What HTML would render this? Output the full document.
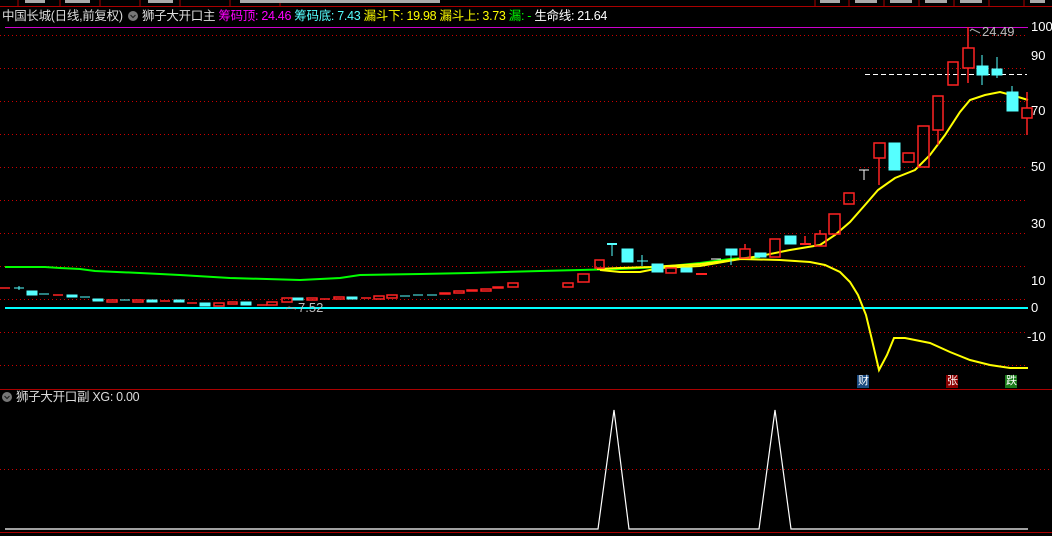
<!DOCTYPE html>
<html><head><meta charset="utf-8"><style>
body{margin:0;background:#000;width:1052px;height:536px;overflow:hidden;font-family:"Liberation Sans","Noto Sans CJK SC",sans-serif;}
svg{position:absolute;left:0;top:0}
.t{position:absolute;font-size:13px;white-space:nowrap;line-height:16px}
.h{font-size:12.5px;letter-spacing:-0.3px}
</style></head><body>
<svg width="1052" height="536">
<rect x="0" y="0" width="1052" height="7" fill="#000"/>
<g stroke="#a00" stroke-width="1">
<line x1="0" y1="6.5" x2="1052" y2="6.5"/>
<line x1="18" y1="0" x2="18" y2="6"/><line x1="60" y1="0" x2="60" y2="6"/><line x1="100" y1="0" x2="100" y2="6"/><line x1="140" y1="0" x2="140" y2="6"/><line x1="180" y1="0" x2="180" y2="6"/><line x1="230" y1="0" x2="230" y2="6"/><line x1="280" y1="0" x2="280" y2="6"/><line x1="815" y1="0" x2="815" y2="6"/><line x1="849" y1="0" x2="849" y2="6"/><line x1="884" y1="0" x2="884" y2="6"/><line x1="919" y1="0" x2="919" y2="6"/><line x1="954" y1="0" x2="954" y2="6"/><line x1="989" y1="0" x2="989" y2="6"/><line x1="1024" y1="0" x2="1024" y2="6"/>
</g>
<g fill="#aaa"><rect x="25" y="0" width="20" height="3"/><rect x="65" y="0" width="25" height="3"/><rect x="148" y="0" width="25" height="3"/><rect x="240" y="0" width="200" height="3"/><rect x="820" y="0" width="20" height="3"/><rect x="855" y="0" width="22" height="3"/><rect x="890" y="0" width="22" height="3"/><rect x="925" y="0" width="22" height="3"/><rect x="960" y="0" width="22" height="3"/><rect x="1030" y="0" width="15" height="3"/></g>
<line x1="5" y1="27.5" x2="1028" y2="27.5" stroke="#c0c" stroke-width="1"/>
<g stroke="#c00" stroke-width="1" stroke-dasharray="1,3">
<line x1="0" y1="35.5" x2="1028" y2="35.5"/><line x1="0" y1="68.5" x2="1028" y2="68.5"/><line x1="0" y1="101.5" x2="1028" y2="101.5"/><line x1="0" y1="134.5" x2="1028" y2="134.5"/><line x1="0" y1="167.5" x2="1028" y2="167.5"/><line x1="0" y1="200.5" x2="1028" y2="200.5"/><line x1="0" y1="233.5" x2="1028" y2="233.5"/><line x1="0" y1="266.5" x2="1028" y2="266.5"/><line x1="0" y1="299.5" x2="1028" y2="299.5"/><line x1="0" y1="332.5" x2="1028" y2="332.5"/><line x1="0" y1="365.5" x2="1028" y2="365.5"/>
<line x1="0" y1="469.5" x2="1052" y2="469.5"/>
</g>
<line x1="5" y1="308" x2="1028" y2="308" stroke="#0ff" stroke-width="2"/>
<line x1="865" y1="74.5" x2="1027" y2="74.5" stroke="#fff" stroke-dasharray="5,3"/>
<polyline fill="none" stroke="#0f0" stroke-width="2" points="5,267 45,267 60,268 80,269 95,271 140,273 180,275 230,278 300,280 340,278 360,275 420,274 470,273 540,271 580,270 620,269 660,267 700,263 730,259 760,257"/>
<polyline fill="none" stroke="#ff0" stroke-width="2" points="600,270 620,272 640,272 660,268 700,266 740,259 760,256 790,250 820,245 835,235 850,222 865,205 878,190 895,178 915,170 930,155 945,135 960,112 970,100 985,95 1000,92 1015,96 1028,100"/>
<polyline fill="none" stroke="#ff0" stroke-width="2" points="597,269 620,268 650,267 700,264 740,259 780,260 810,262 825,265 840,272 850,282 858,295 866,315 872,340 879,370 887,355 894,338 905,338 930,343 950,352 970,360 990,365 1010,368 1028,368"/>
<g stroke="#f22" fill="none" stroke-width="1.5">
<line x1="0" y1="288" x2="10" y2="288"/><line x1="53" y1="295" x2="63" y2="295"/><rect x="107" y="300" width="10" height="2"/><rect x="133" y="300" width="10" height="2"/><line x1="160" y1="301" x2="170" y2="301"/><line x1="187" y1="303" x2="197" y2="303"/><rect x="214" y="303" width="10" height="3"/><rect x="228" y="302" width="9" height="2"/><line x1="257" y1="305" x2="267" y2="305"/><rect x="267" y="302" width="10" height="3"/><rect x="282" y="298" width="10" height="4"/><rect x="307" y="298" width="10" height="2"/><line x1="320" y1="299" x2="330" y2="299"/><rect x="334" y="297" width="10" height="2"/><line x1="361" y1="298" x2="371" y2="298"/><rect x="374" y="296" width="10" height="3"/><rect x="387" y="295" width="10" height="3"/><rect x="440" y="293" width="10" height="1"/><rect x="454" y="291" width="10" height="2"/><rect x="467" y="290" width="10" height="1"/><rect x="481" y="289" width="10" height="2"/><rect x="493" y="287" width="10" height="1"/><rect x="508" y="283" width="10" height="4"/><rect x="563" y="283" width="10" height="4"/>
<rect x="578" y="274" width="11" height="8"/><rect x="595" y="260" width="9" height="8"/><rect x="666" y="268" width="10" height="5"/><line x1="696" y1="274" x2="707" y2="274" stroke-width="2"/>
<rect x="740" y="249" width="10" height="9"/><line x1="745" y1="244" x2="745" y2="249"/><rect x="770" y="239" width="10" height="18"/><line x1="800" y1="244" x2="811" y2="244" stroke-width="2"/><line x1="805" y1="236" x2="805" y2="244"/><rect x="815" y="234" width="11" height="12"/><line x1="820" y1="230" x2="820" y2="234"/><rect x="829" y="214" width="11" height="20"/><rect x="844" y="193" width="10" height="11"/><rect x="874" y="143" width="11" height="15"/><line x1="879" y1="158" x2="879" y2="185"/><rect x="903" y="153" width="11" height="9"/><rect x="918" y="126" width="11" height="41"/><rect x="933" y="96" width="10" height="34"/><line x1="938" y1="130" x2="938" y2="145"/><rect x="948" y="62" width="10" height="23"/><rect x="963" y="48" width="11" height="20"/><line x1="968" y1="27" x2="968" y2="48"/><line x1="968" y1="68" x2="968" y2="83"/><rect x="1022" y="108" width="10" height="10"/><line x1="1027" y1="92" x2="1027" y2="108"/><line x1="1027" y1="118" x2="1027" y2="135"/>
</g>
<g fill="#5ff" stroke="#5ff" stroke-width="1">
<line x1="14" y1="288" x2="24" y2="288"/><line x1="19" y1="286" x2="19" y2="290"/><rect x="27" y="291" width="10" height="4"/><line x1="39" y1="294" x2="49" y2="294"/><rect x="67" y="295" width="10" height="2"/><line x1="80" y1="297" x2="90" y2="297"/><rect x="93" y="299" width="10" height="2"/><line x1="120" y1="300" x2="130" y2="300"/><rect x="147" y="300" width="10" height="2"/><rect x="174" y="300" width="10" height="2"/><rect x="200" y="303" width="10" height="3"/><rect x="241" y="302" width="10" height="3"/><rect x="293" y="298" width="10" height="2"/><rect x="347" y="297" width="10" height="2"/><line x1="400" y1="296" x2="410" y2="296"/><line x1="413" y1="295" x2="423" y2="295"/><line x1="427" y1="295" x2="437" y2="295"/>
<line x1="607" y1="244" x2="617" y2="244" stroke-width="2"/><line x1="612" y1="244" x2="612" y2="256"/><rect x="622" y="249" width="11" height="13"/><line x1="637" y1="261" x2="648" y2="261"/><line x1="642" y1="255" x2="642" y2="266"/><rect x="652" y="264" width="11" height="8"/><rect x="681" y="268" width="11" height="4"/><rect x="726" y="249" width="11" height="6"/><line x1="731" y1="255" x2="731" y2="265"/><rect x="755" y="253" width="11" height="4"/><rect x="785" y="236" width="11" height="8"/><rect x="889" y="143" width="11" height="27"/><rect x="977" y="66" width="11" height="9"/><line x1="982" y1="55" x2="982" y2="85"/><rect x="992" y="69" width="10" height="6"/><line x1="997" y1="57" x2="997" y2="78"/><rect x="1007" y="92" width="11" height="19"/><line x1="1012" y1="86" x2="1012" y2="92"/>
</g>
<g stroke="#fff"><line x1="711" y1="259" x2="721" y2="259"/><line x1="859" y1="170" x2="869" y2="170"/><line x1="864" y1="170" x2="864" y2="180"/></g>
<polyline points="980,33 972,29 970,31" fill="none" stroke="#aaa"/>
<polyline points="296,309 289,307 286,309" fill="none" stroke="#aaa"/>
<rect x="857" y="375" width="12" height="13" fill="#1a4a80"/><rect x="946" y="375" width="12" height="13" fill="#8b0000"/><rect x="1005" y="375" width="12" height="13" fill="#1a7a1a"/>
<line x1="0" y1="389.5" x2="1052" y2="389.5" stroke="#a00"/>
<polyline fill="none" stroke="#fff" stroke-width="1.2" points="5,529 598,529 614,410 629,529 759,529 775,410 791,529 1028,529"/>
<line x1="0" y1="532.5" x2="1052" y2="532.5" stroke="#a00"/>
<circle cx="7" cy="397" r="5" fill="#777"/><polyline points="4.5,396 7,398.5 9.5,396" fill="none" stroke="#222" stroke-width="1.2"/>
<circle cx="133" cy="16" r="5" fill="#777"/><polyline points="130.5,15 133,17.5 135.5,15" fill="none" stroke="#222" stroke-width="1.2"/>
</svg>
<div class="t h" style="left:2px;top:8px;color:#ddd">中国长城(日线,前复权)</div>
<div class="t h" style="left:142px;top:8px;color:#ddd">狮子大开口主 <span style="color:#f0f">筹码顶: 24.46</span> <span style="color:#5ff">筹码底: 7.43</span> <span style="color:#ff0">漏斗下: 19.98</span> <span style="color:#ff0">漏斗上: 3.73</span> <span style="color:#0f0">漏: -</span> <span style="color:#fff">生命线: 21.64</span></div>
<div class="t h" style="left:16px;top:389px;color:#ddd">狮子大开口副 XG: 0.00</div>
<div class="t" style="left:982px;top:24px;color:#bbb">24.49</div>
<div class="t" style="left:298px;top:300px;color:#bbb">7.52</div>
<div class="t" style="left:858px;top:373px;color:#fff;font-size:11px">财</div>
<div class="t" style="left:947px;top:373px;color:#fff;font-size:11px">张</div>
<div class="t" style="left:1006px;top:373px;color:#fff;font-size:11px">跌</div>
<div class="t" style="left:1031px;top:19px;color:#fff">100</div>
<div class="t" style="left:1031px;top:48px;color:#fff">90</div>
<div class="t" style="left:1031px;top:103px;color:#fff">70</div>
<div class="t" style="left:1031px;top:159px;color:#fff">50</div>
<div class="t" style="left:1031px;top:216px;color:#fff">30</div>
<div class="t" style="left:1031px;top:273px;color:#fff">10</div>
<div class="t" style="left:1031px;top:300px;color:#fff">0</div>
<div class="t" style="left:1027px;top:329px;color:#fff">-10</div>
</body></html>
